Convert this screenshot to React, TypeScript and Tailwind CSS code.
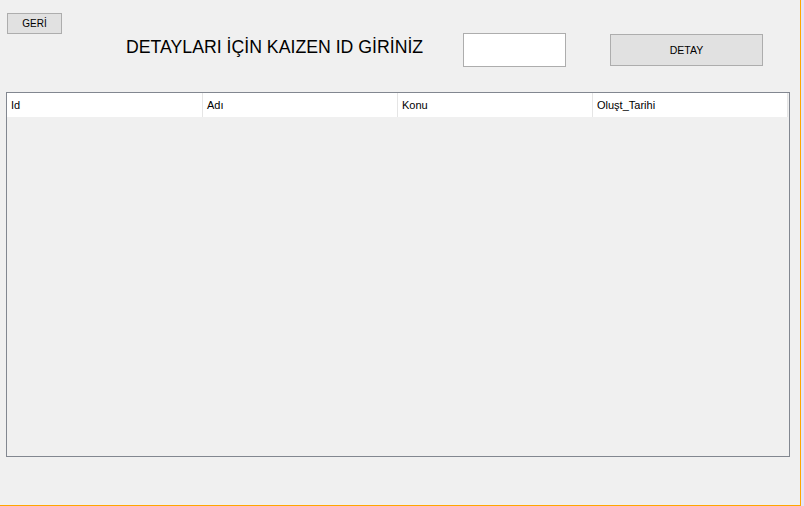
import React from 'react';

const columns = [
  { label: 'Id', w: 'w-[196px]' },
  { label: 'Adı', w: 'w-[195px]' },
  { label: 'Konu', w: 'w-[195px]' },
  { label: 'Oluşt_Tarihi', w: 'w-[195px]' },
];

export default function App() {
  return (
    <div className="flex w-[804px] h-[506px] bg-[#e3e3f8] font-['Liberation_Sans',Arial,sans-serif] text-black">
      <div className="w-[801px] h-[506px] bg-[#f0f0f0] border-r border-b border-[#ffa500] pl-[6px] pt-[13px]">

        {/* top bar */}
        <div className="flex items-start">
          <button className="ml-[1px] w-[55px] h-[21px] bg-[#e1e1e1] border border-[#adadad] text-[10px] leading-none">
            GERİ
          </button>
          <div className="ml-[64px] mt-[24px] w-[337px] text-[17.7px] leading-[20px] whitespace-nowrap">
            DETAYLARI İÇİN KAIZEN ID GİRİNİZ
          </div>
          <input className="mt-[20px] w-[103px] h-[34px] bg-white border border-[#adadad] outline-none" />
          <button className="ml-[44px] mt-[21px] w-[153px] h-[32px] bg-[#e1e1e1] border border-[#adadad] text-[10.5px] leading-none">
            DETAY
          </button>
        </div>

        {/* grid */}
        <div className="mt-[25px] w-[784px] h-[365px] border border-[#828790] bg-[#f0f0f0]">
          <div className="flex h-[24px] w-[782px]">
            {columns.map((c) => (
              <div
                key={c.label}
                className={`${c.w} h-full bg-white border-r border-[#e5e5e5] pl-[4px] flex items-center text-[11px]`}
              >
                {c.label}
              </div>
            ))}
          </div>
        </div>

      </div>
    </div>
  );
}
